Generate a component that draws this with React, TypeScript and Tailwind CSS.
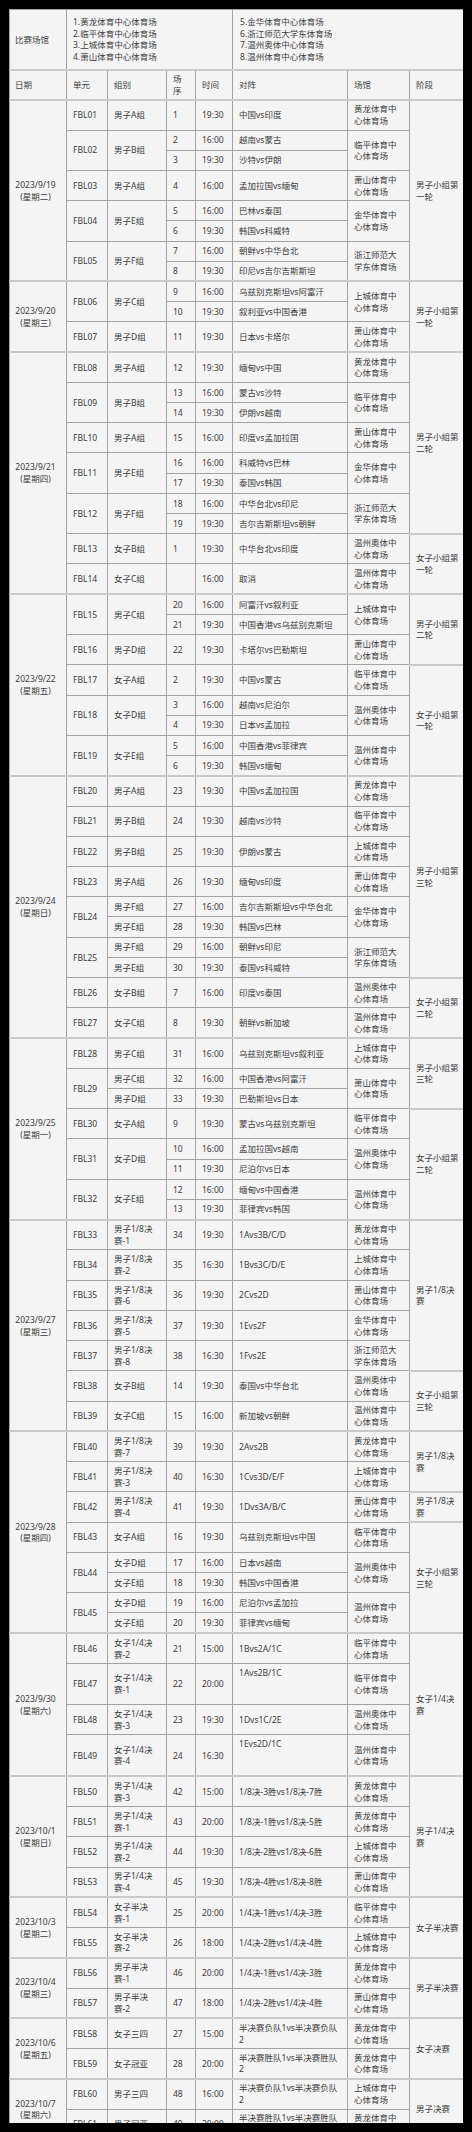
import React from "react";

type Match = { seq: string; time: string; vs: string; group?: string; top?: boolean };
type Unit = { id: string; group?: string; venue: string; matches: Match[] };
type Stage = { label: string; units: Unit[] };
type Day = { date: string; stages: Stage[] };

const V: Record<string, string> = {
  hl: "黄龙体育中\n心体育场",
  lp: "临平体育中\n心体育场",
  sc: "上城体育中\n心体育场",
  xs: "萧山体育中\n心体育场",
  jh: "金华体育中\n心体育场",
  zs: "浙江师范大\n学东体育场",
  wa: "温州奥体中\n心体育场",
  wt: "温州体育中\n心体育场",
};

const m = (seq: string, time: string, vs: string, group?: string, top?: boolean): Match => ({ seq, time, vs, group, top });
const u = (id: string, group: string | undefined, venue: string, matches: Match[]): Unit => ({ id, group, venue: V[venue], matches });

const days: Day[] = [
  {
    date: "2023/9/19\n(星期二)",
    stages: [
      {
        label: "男子小组第\n一轮",
        units: [
          u("FBL01", "男子A组", "hl", [m("1", "19:30", "中国vs印度")]),
          u("FBL02", "男子B组", "lp", [m("2", "16:00", "越南vs蒙古"), m("3", "19:30", "沙特vs伊朗")]),
          u("FBL03", "男子A组", "xs", [m("4", "16:00", "孟加拉国vs缅甸")]),
          u("FBL04", "男子E组", "jh", [m("5", "16:00", "巴林vs泰国"), m("6", "19:30", "韩国vs科威特")]),
          u("FBL05", "男子F组", "zs", [m("7", "16:00", "朝鲜vs中华台北"), m("8", "19:30", "印尼vs吉尔吉斯斯坦")]),
        ],
      },
    ],
  },
  {
    date: "2023/9/20\n(星期三)",
    stages: [
      {
        label: "男子小组第\n一轮",
        units: [
          u("FBL06", "男子C组", "sc", [m("9", "16:00", "乌兹别克斯坦vs阿富汗"), m("10", "19:30", "叙利亚vs中国香港")]),
          u("FBL07", "男子D组", "xs", [m("11", "19:30", "日本vs卡塔尔")]),
        ],
      },
    ],
  },
  {
    date: "2023/9/21\n(星期四)",
    stages: [
      {
        label: "男子小组第\n二轮",
        units: [
          u("FBL08", "男子A组", "hl", [m("12", "19:30", "缅甸vs中国")]),
          u("FBL09", "男子B组", "lp", [m("13", "16:00", "蒙古vs沙特"), m("14", "19:30", "伊朗vs越南")]),
          u("FBL10", "男子A组", "xs", [m("15", "16:00", "印度vs孟加拉国")]),
          u("FBL11", "男子E组", "jh", [m("16", "16:00", "科威特vs巴林"), m("17", "19:30", "泰国vs韩国")]),
          u("FBL12", "男子F组", "zs", [m("18", "16:00", "中华台北vs印尼"), m("19", "19:30", "吉尔吉斯斯坦vs朝鲜")]),
        ],
      },
      {
        label: "女子小组第\n一轮",
        units: [
          u("FBL13", "女子B组", "wa", [m("1", "19:30", "中华台北vs印度")]),
          u("FBL14", "女子C组", "wt", [m("", "16:00", "取消")]),
        ],
      },
    ],
  },
  {
    date: "2023/9/22\n(星期五)",
    stages: [
      {
        label: "男子小组第\n二轮",
        units: [
          u("FBL15", "男子C组", "sc", [m("20", "16:00", "阿富汗vs叙利亚"), m("21", "19:30", "中国香港vs乌兹别克斯坦")]),
          u("FBL16", "男子D组", "xs", [m("22", "19:30", "卡塔尔vs巴勒斯坦")]),
        ],
      },
      {
        label: "女子小组第\n一轮",
        units: [
          u("FBL17", "女子A组", "lp", [m("2", "19:30", "中国vs蒙古")]),
          u("FBL18", "女子D组", "wa", [m("3", "16:00", "越南vs尼泊尔"), m("4", "19:30", "日本vs孟加拉")]),
          u("FBL19", "女子E组", "wt", [m("5", "16:00", "中国香港vs菲律宾"), m("6", "19:30", "韩国vs缅甸")]),
        ],
      },
    ],
  },
  {
    date: "2023/9/24\n(星期日)",
    stages: [
      {
        label: "男子小组第\n三轮",
        units: [
          u("FBL20", "男子A组", "hl", [m("23", "19:30", "中国vs孟加拉国")]),
          u("FBL21", "男子B组", "lp", [m("24", "19:30", "越南vs沙特")]),
          u("FBL22", "男子B组", "sc", [m("25", "19:30", "伊朗vs蒙古")]),
          u("FBL23", "男子A组", "xs", [m("26", "19:30", "缅甸vs印度")]),
          u("FBL24", undefined, "jh", [m("27", "16:00", "吉尔吉斯斯坦vs中华台北", "男子F组"), m("28", "19:30", "韩国vs巴林", "男子E组")]),
          u("FBL25", undefined, "zs", [m("29", "16:00", "朝鲜vs印尼", "男子F组"), m("30", "19:30", "泰国vs科威特", "男子E组")]),
        ],
      },
      {
        label: "女子小组第\n二轮",
        units: [
          u("FBL26", "女子B组", "wa", [m("7", "16:00", "印度vs泰国")]),
          u("FBL27", "女子C组", "wt", [m("8", "19:30", "朝鲜vs新加坡")]),
        ],
      },
    ],
  },
  {
    date: "2023/9/25\n(星期一)",
    stages: [
      {
        label: "男子小组第\n三轮",
        units: [
          u("FBL28", "男子C组", "sc", [m("31", "16:00", "乌兹别克斯坦vs叙利亚")]),
          u("FBL29", undefined, "xs", [m("32", "16:00", "中国香港vs阿富汗", "男子C组"), m("33", "19:30", "巴勒斯坦vs日本", "男子D组")]),
        ],
      },
      {
        label: "女子小组第\n二轮",
        units: [
          u("FBL30", "女子A组", "lp", [m("9", "19:30", "蒙古vs乌兹别克斯坦")]),
          u("FBL31", "女子D组", "wa", [m("10", "16:00", "孟加拉国vs越南"), m("11", "19:30", "尼泊尔vs日本")]),
          u("FBL32", "女子E组", "wt", [m("12", "16:00", "缅甸vs中国香港"), m("13", "19:30", "菲律宾vs韩国")]),
        ],
      },
    ],
  },
  {
    date: "2023/9/27\n(星期三)",
    stages: [
      {
        label: "男子1/8决\n赛",
        units: [
          u("FBL33", "男子1/8决\n赛-1", "hl", [m("34", "19:30", "1Avs3B/C/D")]),
          u("FBL34", "男子1/8决\n赛-2", "sc", [m("35", "16:30", "1Bvs3C/D/E")]),
          u("FBL35", "男子1/8决\n赛-6", "xs", [m("36", "19:30", "2Cvs2D")]),
          u("FBL36", "男子1/8决\n赛-5", "jh", [m("37", "19:30", "1Evs2F")]),
          u("FBL37", "男子1/8决\n赛-8", "zs", [m("38", "16:30", "1Fvs2E")]),
        ],
      },
      {
        label: "女子小组第\n三轮",
        units: [
          u("FBL38", "女子B组", "wa", [m("14", "19:30", "泰国vs中华台北")]),
          u("FBL39", "女子C组", "wt", [m("15", "16:00", "新加坡vs朝鲜")]),
        ],
      },
    ],
  },
  {
    date: "2023/9/28\n(星期四)",
    stages: [
      {
        label: "男子1/8决\n赛",
        units: [
          u("FBL40", "男子1/8决\n赛-7", "hl", [m("39", "19:30", "2Avs2B")]),
          u("FBL41", "男子1/8决\n赛-3", "sc", [m("40", "16:30", "1Cvs3D/E/F")]),
        ],
      },
      {
        label: "男子1/8决\n赛",
        units: [u("FBL42", "男子1/8决\n赛-4", "xs", [m("41", "19:30", "1Dvs3A/B/C")])],
      },
      {
        label: "女子小组第\n三轮",
        units: [
          u("FBL43", "女子A组", "lp", [m("16", "19:30", "乌兹别克斯坦vs中国")]),
          u("FBL44", undefined, "wa", [m("17", "16:00", "日本vs越南", "女子D组"), m("18", "19:30", "韩国vs中国香港", "女子E组")]),
          u("FBL45", undefined, "wt", [m("19", "16:00", "尼泊尔vs孟加拉", "女子D组"), m("20", "19:30", "菲律宾vs缅甸", "女子E组")]),
        ],
      },
    ],
  },
  {
    date: "2023/9/30\n(星期六)",
    stages: [
      {
        label: "女子1/4决\n赛",
        units: [
          u("FBL46", "女子1/4决\n赛-2", "lp", [m("21", "15:00", "1Bvs2A/1C")]),
          u("FBL47", "女子1/4决\n赛-1", "lp", [m("22", "20:00", "1Avs2B/1C", undefined, true)]),
          u("FBL48", "女子1/4决\n赛-3", "wa", [m("23", "19:30", "1Dvs1C/2E")]),
          u("FBL49", "女子1/4决\n赛-4", "wt", [m("24", "16:30", "1Evs2D/1C", undefined, true)]),
        ],
      },
    ],
  },
  {
    date: "2023/10/1\n(星期日)",
    stages: [
      {
        label: "男子1/4决\n赛",
        units: [
          u("FBL50", "男子1/4决\n赛-3", "hl", [m("42", "15:00", "1/8决-3胜vs1/8决-7胜")]),
          u("FBL51", "男子1/4决\n赛-1", "hl", [m("43", "20:00", "1/8决-1胜vs1/8决-5胜")]),
          u("FBL52", "男子1/4决\n赛-2", "sc", [m("44", "19:30", "1/8决-2胜vs1/8决-6胜")]),
          u("FBL53", "男子1/4决\n赛-4", "xs", [m("45", "19:30", "1/8决-4胜vs1/8决-8胜")]),
        ],
      },
    ],
  },
  {
    date: "2023/10/3\n(星期二)",
    stages: [
      {
        label: "女子半决赛",
        units: [
          u("FBL54", "女子半决\n赛-1", "lp", [m("25", "20:00", "1/4决-1胜vs1/4决-3胜")]),
          u("FBL55", "女子半决\n赛-2", "sc", [m("26", "18:00", "1/4决-2胜vs1/4决-4胜")]),
        ],
      },
    ],
  },
  {
    date: "2023/10/4\n(星期三)",
    stages: [
      {
        label: "男子半决赛",
        units: [
          u("FBL56", "男子半决\n赛-1", "hl", [m("46", "20:00", "1/4决-1胜vs1/4决-3胜")]),
          u("FBL57", "男子半决\n赛-2", "xs", [m("47", "18:00", "1/4决-2胜vs1/4决-4胜")]),
        ],
      },
    ],
  },
  {
    date: "2023/10/6\n(星期五)",
    stages: [
      {
        label: "女子决赛",
        units: [
          u("FBL58", "女子三四", "hl", [m("27", "15:00", "半决赛负队1vs半决赛负队\n2")]),
          u("FBL59", "女子冠亚", "hl", [m("28", "20:00", "半决赛胜队1vs半决赛胜队\n2")]),
        ],
      },
    ],
  },
  {
    date: "2023/10/7\n(星期六)",
    stages: [
      {
        label: "男子决赛",
        units: [
          u("FBL60", "男子三四", "sc", [m("48", "16:00", "半决赛负队1vs半决赛负队\n2")]),
          u("FBL61", "男子冠亚", "hl", [m("49", "20:00", "半决赛胜队1vs半决赛胜队\n2")]),
        ],
      },
    ],
  },
];

const cell = "border border-[#a2a2a2] px-[6px] py-[2px] text-left whitespace-pre";
const thick = "border-t-2 border-t-[#c9c9c9]";

const count = (units: Unit[]) => units.reduce((a, x) => a + x.matches.length, 0);

export default function App() {
  const rows: React.ReactNode[] = [];

  days.forEach((day) => {
    const dayCount = day.stages.reduce((a, s) => a + count(s.units), 0);
    let firstOfDay = true;
    day.stages.forEach((st) => {
      const stCount = count(st.units);
      let firstOfStage = true;
      st.units.forEach((un) => {
        const n = un.matches.length;
        un.matches.forEach((mt, mi) => {
          const h = n > 1 ? "h-[20.2px]" : mt.top ? "h-[41.3px]" : "h-[30.25px]";
          const t = firstOfDay ? thick : "";
          rows.push(
            <tr key={un.id + "-" + mi} className={h}>
              {firstOfDay && (
                <td
                  rowSpan={dayCount}
                  className={`border border-[#a2a2a2] ${thick} pl-[1px] pr-[6px] py-[2px] text-center align-middle whitespace-pre`}
                >
                  {day.date}
                </td>
              )}
              {mi === 0 && (
                <td rowSpan={n} className={`${cell} ${t} align-middle`}>
                  {un.id}
                </td>
              )}
              {un.group
                ? mi === 0 && (
                    <td rowSpan={n} className={`${cell} ${t} align-middle`}>
                      {un.group}
                    </td>
                  )
                : (
                    <td className={`${cell} ${t} align-middle`}>{mt.group}</td>
                  )}
              <td className={`${cell} ${t} align-middle`}>{mt.seq}</td>
              <td className={`${cell} ${t} align-middle`}>{mt.time}</td>
              <td className={`${cell} ${t} ${mt.top ? "align-top pt-[3px]" : "align-middle"}`}>{mt.vs}</td>
              {mi === 0 && (
                <td rowSpan={n} className={`${cell} ${t} align-middle`}>
                  {un.venue}
                </td>
              )}
              {firstOfStage && (
                <td rowSpan={stCount} className={`${cell} ${thick} align-middle`}>
                  {st.label}
                </td>
              )}
            </tr>
          );
          firstOfDay = false;
          firstOfStage = false;
        });
      });
    });
  });

  return (
    <div className="w-[472px] h-[2132px] bg-black p-[9px] overflow-hidden">
      <div className="h-full overflow-hidden bg-[#f4f4f4]">
        <table className="w-full table-fixed border-collapse font-['Noto_Sans','Noto_Sans_CJK_SC',sans-serif] text-[8.5px] leading-[11.7px] text-[#3c3c3c]">
          <colgroup>
            <col className="w-[57px]" />
            <col className="w-[41px]" />
            <col className="w-[59px]" />
            <col className="w-[29px]" />
            <col className="w-[37px]" />
            <col className="w-[115px]" />
            <col className="w-[62px]" />
            <col className="w-[54px]" />
          </colgroup>
          <tbody>
            <tr className="h-[60.3px]">
              <td className="border border-[#a2a2a2] px-[5px] py-[2px] text-left align-middle">比赛场馆</td>
              <td colSpan={4} className={`${cell} align-middle`}>
                {"1.黄龙体育中心体育场\n2.临平体育中心体育场\n3.上城体育中心体育场\n4.萧山体育中心体育场"}
              </td>
              <td colSpan={3} className={`${cell} align-middle pl-[7px]`}>
                {"5.金华体育中心体育场\n6.浙江师范大学东体育场\n7.温州奥体中心体育场\n8.温州体育中心体育场"}
              </td>
            </tr>
            <tr className="h-[30px]">
              <td className={`border border-[#a2a2a2] ${thick} px-[5px] py-[2px] text-left align-middle`}>日期</td>
              <td className={`${cell} ${thick} align-middle`}>单元</td>
              <td className={`${cell} ${thick} align-middle`}>组别</td>
              <td className={`${cell} ${thick} align-middle`}>{"场\n序"}</td>
              <td className={`${cell} ${thick} align-middle`}>时间</td>
              <td className={`${cell} ${thick} align-middle`}>对阵</td>
              <td className={`${cell} ${thick} align-middle`}>场馆</td>
              <td className={`${cell} ${thick} align-middle`}>阶段</td>
            </tr>
            {rows}
          </tbody>
        </table>
      </div>
    </div>
  );
}
